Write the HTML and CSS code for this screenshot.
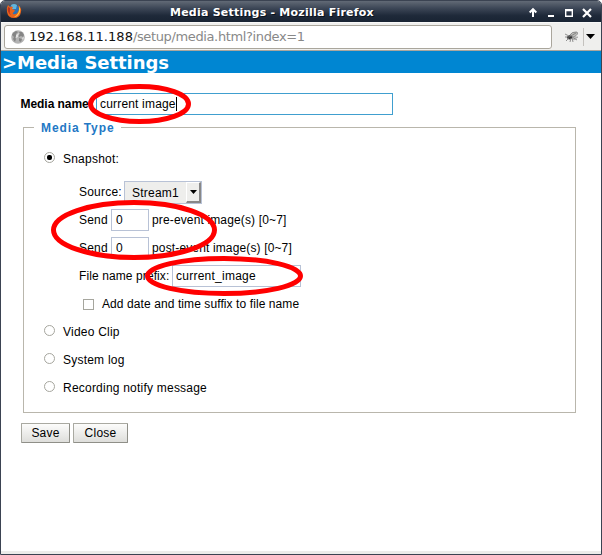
FILE: index.html
```html
<!DOCTYPE html>
<html lang="en">
<head>
<meta charset="utf-8">
<title>Media Settings</title>
<link rel="stylesheet" href="styles.css">
</head>
<body>
<div class="window">
  <header class="titlebar">
    <svg class="firefox" width="16" height="16" viewBox="0 0 16 16">
      <circle cx="8" cy="7.5" r="6" fill="#2b72b5"/>
      <path d="M5 2Q8 0 11 2L10 6L6 6Z" fill="#61b5dc"/>
      <path d="M2 2L4 4Q5 3 7 4L6 6L9 7L8 9Q6 10 7 11Q10 12 12 9Q14 6 12 2Q16 5 15 9Q14 15 8 15Q2 15 1 9Q0 5 2 2Z" fill="#e8641b"/>
      <path d="M13 3Q15 6 14 9Q12 14 8 14Q13 11 13 7Z" fill="#ffc43d"/>
      <path d="M2 4L4 5L4 8Q3 10 5 12Q1 10 2 4Z" fill="#b93420"/>
    </svg>
    <span class="title">Media Settings - Mozilla Firefox</span>
    <svg class="controls" width="66" height="14" viewBox="0 0 66 14">
      <g fill="none" stroke="#fff" stroke-width="2">
        <path d="M5 11V4M1.7 6.5L5 3.2L8.3 6.5"/>
        <path d="M20 10H26"/>
        <path stroke-width="1.4" d="M37.7 4.5V10.3H44.3V4.5Z"/>
        <path d="M37 4H45"/>
        <path stroke-width="2.2" d="M55 3L63 11M63 3L55 11"/>
      </g>
    </svg>
  </header>
  <nav class="toolbar">
    <div class="address">
      <svg class="globe" width="14" height="14" viewBox="0 0 14 14">
        <circle cx="7" cy="7" r="6.8" fill="#b3b3b3"/>
        <path d="M2 3L5 1L7 2L5 4L6 6L4 7L5 9L4 12L2 9L3 7L1 5ZM8 2L11 2L13 5L12 7L10 6L8 7L7 5L9 4ZM8 8L11 9L10 12L8 11Z" fill="#858585"/>
        <path d="M5 5L8 3L7 7L5 8ZM11 8L13 7L12 10Z" fill="#e2e2e2"/>
      </svg>
      <span class="url"><b>192.168.11.188</b>/setup/media.html?index=1</span>
    </div>
    <svg class="addon" width="16" height="14" viewBox="0 0 16 14">
      <path d="M5 6Q8 1 13 2Q15 4 10 7Z" fill="#bcbcb8" stroke="#777" stroke-width=".7"/>
      <path d="M6 7L14 7L10 10Z" fill="#c8c8c4" stroke="#999" stroke-width=".6"/>
      <ellipse cx="5.500" cy="7.500" rx="2.500" ry="2" fill="#333"/>
      <path d="M1 4L5 6M1 7H5M2 11L5 8M6 12L7 8M9 12L8 8M13 10L8 7M5 7L12 3" fill="none" stroke="#777" stroke-width=".8"/>
    </svg>
    <span class="divider"></span>
    <svg class="drop" width="9" height="5" viewBox="0 0 9 5"><path d="M0 0H9L4.500 5Z" fill="#000"/></svg>
  </nav>
  <h1 class="heading"><span>&gt;Media Settings</span></h1>
  <main class="page">
    <div class="row name-row"><b class="name-label">Media name:</b><div class="field name-field"><span>current image</span><i class="caret"></i></div></div>
    <section class="group">
      <div class="legend"><span>Media Type</span></div>
      <div class="row option first"><i class="radio on"></i><span>Snapshot:</span></div>
      <div class="row sub source"><span class="t-source">Source:</span>
        <div class="select"><span>Stream1</span><i class="select-btn"><svg width="7" height="4" viewBox="0 0 7 4"><path d="M0 0H7L3.500 4Z"/></svg></i></div></div>
      <div class="row sub"><span class="t-send">Send</span><div class="field num">0</div><span class="t-count">pre-event image(s) [0~7]</span></div>
      <div class="row sub"><span class="t-send">Send</span><div class="field num">0</div><span class="t-count">post-event image(s) [0~7]</span></div>
      <div class="row sub"><span class="t-prefix">File name prefix:</span><div class="field prefix">current_image</div></div>
      <div class="row sub"><i class="check"></i><span class="t-suffix">Add date and time suffix to file name</span></div>
      <div class="row option"><i class="radio"></i><span>Video Clip</span></div>
      <div class="row option"><i class="radio"></i><span>System log</span></div>
      <div class="row option"><i class="radio"></i><span>Recording notify message</span></div>
    </section>
    <div class="actions"><div class="button save">Save</div><div class="button close">Close</div></div>
  </main>
  <svg class="marks" width="602" height="555" viewBox="0 0 602 555">
    <g fill="none" stroke="#f00" stroke-width="5">
      <ellipse cx="139.500" cy="104" rx="49" ry="17.500"/>
      <ellipse cx="134" cy="230" rx="80.500" ry="27.500"/>
      <ellipse cx="224" cy="276" rx="76.500" ry="17.500"/>
    </g>
  </svg>
</div>
</body>
</html>
```
FILE: styles.css
```css
* { box-sizing: border-box; }
html, body { margin: 0; background: #fff; }
body { font: 12px/16px "Liberation Sans", Arial, sans-serif; color: #000; letter-spacing: .22px; }
svg { display: block; flex: none; }
.window {
  position: relative; width: 602px; height: 555px; overflow: hidden;
  border: 1px solid #3b4352;
  border-radius: 5px 5px 0 0; display: flex; flex-direction: column;
}
.titlebar {
  height: 21px; flex: none; display: flex; align-items: center;
  background: linear-gradient(#626a76, #3c4656 35%, #1e2939 70%, #192433);
}
.firefox { margin: -1px 0 0 5px; }
.title {
  margin: 2px 0 0 148px; width: 206px; white-space: nowrap;
  font: bold 11px/16px "DejaVu Sans", sans-serif; letter-spacing: .23px; color: #fff;
  text-shadow: 1px 1px 0 #0a111b;
}
.controls { margin-left: 152px; margin-top: 2px; }
.toolbar {
  height: 29px; flex: none; background: #efefed; border-top: 1px solid #f8f8f7;
  border-bottom: 1px solid #aaa69e; display: flex; align-items: center; padding-left: 3px;
}
.address {
  width: 548px; height: 24px; border: 1px solid #aaa69c; border-radius: 3px; background: #fff;
  display: flex; align-items: center; padding-left: 6px;
}
.url { margin-left: 4px; font: 13px/18px "DejaVu Sans", sans-serif; letter-spacing: -.37px; color: #888; white-space: nowrap; }
.url b { font-weight: normal; color: #111; letter-spacing: .04px; }
.addon { margin-left: 12px; }
.divider { width: 1px; height: 18px; background: #c4c2be; margin: 0 2px 0 3px; }
.heading {
  margin: 0; height: 22px; flex: none; background: #0086d2; color: #fff; padding-left: 1px;
  font: bold 18px/23px "DejaVu Sans", sans-serif; letter-spacing: -.04px; white-space: nowrap;
}
.page { flex: 1; padding: 20px 25px 0 20px; border-bottom: 3px solid #ececea; }
.row { display: flex; align-items: center; height: 28px; white-space: nowrap; }
.name-row { height: 22px; margin-left: -1px; }
.name-label { width: 76px; padding-left: .5px; letter-spacing: -.05px; }
.field { height: 22px; border: 1px solid #b8c2d6; background: #fff; padding-left: 4px; line-height: 21px; }
.name-field { width: 297px; padding-left: 3px; border-color: #409fcf; display: flex; align-items: center; letter-spacing: .18px; }
.caret { width: 1px; height: 14px; background: #000; }
.group { margin: 12px 0 0 2px; width: 553px; height: 286px; border: 1px solid #b9b6ac; }
.legend { height: 16px; margin: -8px 0 11px 10px; }
.legend span { display: inline-block; width: 87px; height: 16px; padding-left: 7px; background: #fff; color: #2378c5; font-weight: bold; letter-spacing: .9px; line-height: 17px; vertical-align: top; }
.option { padding-left: 20px; }
.first { height: 24px; padding-bottom: 1px; }
.first .radio { margin-top: -2px; }
.radio { width: 11px; height: 11px; margin: -3px 8px 0 0; border: 1px solid #a6a69e; border-radius: 50%; background: #fff; display: flex; align-items: center; justify-content: center; }
.radio.on::after { content: ""; width: 5px; height: 5px; border-radius: 2px; background: #000; }
.sub { padding-left: 55px; }
.source { margin-top: 7px; }
.t-source { width: 45px; }
.select { width: 78px; height: 23px; border: 1px solid #b8c2d6; background: #eeeeec; padding-left: 7px; display: flex; line-height: 22px; }
.select span { flex: 1; }
.select-btn { width: 15px; border: solid #888; border-width: 1px 2px 2px 1px; border-top-color: #fff; border-left-color: #fff; background: #eeeeec; display: flex; align-items: center; justify-content: center; }
.t-send { width: 32px; }
.t-count { letter-spacing: .14px; }
.num { width: 38px; margin-right: 3px; }
.t-prefix { width: 93px; letter-spacing: .1px; }
.prefix { width: 129px; padding-left: 3px; letter-spacing: .25px; }
.check { width: 11px; height: 11px; border: 1px solid #a6a69e; margin: 0 8px 0 4px; }
.t-suffix { letter-spacing: .09px; }
.actions { display: flex; gap: 3px; margin-top: 10px; }
.button { height: 20px; border: 1px solid #a9a9a1; border-right-color: #8f8f88; border-bottom-color: #8f8f88; border-radius: 1px; background: linear-gradient(#fcfcfb, #dededb); text-align: center; line-height: 19px; }
.save { width: 49px; }
.close { width: 55px; }
.marks { position: absolute; left: -1px; top: -1px; pointer-events: none; }
```
